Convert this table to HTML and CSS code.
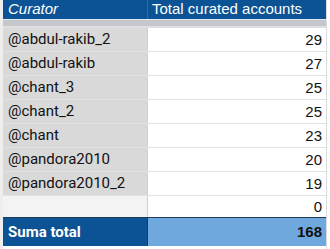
FILE: index.html
```html
<!DOCTYPE html>
<html>
<head>
<meta charset="utf-8">
<link rel="stylesheet" href="styles.css">
</head>
<body>
<div class="page">
  <div class="gutter"></div>
  <div class="sheet">
    <div class="row head">
      <div class="c1">Curator</div>
      <div class="c2">Total curated accounts</div>
    </div>
    <div class="freeze"></div>
    <div class="row"><div class="c1">@abdul-rakib_2</div><div class="c2">29</div></div>
    <div class="row"><div class="c1">@abdul-rakib</div><div class="c2">27</div></div>
    <div class="row"><div class="c1">@chant_3</div><div class="c2">25</div></div>
    <div class="row"><div class="c1">@chant_2</div><div class="c2">25</div></div>
    <div class="row"><div class="c1">@chant</div><div class="c2">23</div></div>
    <div class="row"><div class="c1">@pandora2010</div><div class="c2">20</div></div>
    <div class="row"><div class="c1">@pandora2010_2</div><div class="c2">19</div></div>
    <div class="row empty"><div class="c1"></div><div class="c2">0</div></div>
    <div class="row foot">
      <div class="c1">Suma total</div>
      <div class="c2">168</div>
    </div>
  </div>
  <div class="edge"></div>
</div>
</body>
</html>
```
FILE: styles.css
```css
html, body {
  margin: 0;
  padding: 0;
  background: #ffffff;
}
.page {
  display: flex;
  width: 330px;
  height: 249px;
  overflow: hidden;
}
.gutter {
  width: 3px;
  flex: none;
  background: #eeeeee;
}
.edge {
  flex: 1;
  background: #ffffff;
  border-left: 1px solid #dadada;
}
.sheet {
  width: 323px;
  flex: none;
  display: flex;
  flex-direction: column;
}
.row {
  display: grid;
  grid-template-columns: 145px 178px;
  height: 24px;
  box-sizing: border-box;
  border-bottom: 1px solid #e2e2e2;
}
.c1 {
  background: #d9d9d9;
  font-family: Roboto, "Liberation Sans", sans-serif;
  font-size: 15px;
  color: #111;
  padding-left: 5px;
  line-height: 23px;
  border-right: 1px solid #d0d0d0;
}
.c2 {
  background: #ffffff;
  font-family: "Liberation Sans", Arial, sans-serif;
  font-size: 15px;
  color: #111;
  text-align: right;
  padding-right: 4px;
  line-height: 23px;
}
.row.head {
  height: 19px;
  border-bottom: none;
}
.head .c1, .head .c2 {
  background: #0b5394;
  color: #ffffff;
  font-family: "Liberation Sans", Arial, sans-serif;
  line-height: 18px;
  font-size: 15px;
}
.head .c1 {
  font-style: italic;
  border-right: 1px solid #2a6aa8;
}
.head .c2 {
  text-align: left;
  padding-left: 4px;
}
.freeze {
  height: 9px;
  box-sizing: border-box;
  background: #c4c7cc;
  border-top: 1px solid #e4e6e9;
  border-bottom: 2px solid #e0e0e0;
}
.row.empty .c1 {
  background: #f3f3f3;
}
.row.empty {
  height: 22px;
  border-bottom: 2px solid #1f3b57;
}
.row.empty .c1, .row.empty .c2 {
  line-height: 21px;
}
.row.foot {
  height: 27px;
  border-bottom: none;
}
.foot .c1 {
  background: #0b5394;
  color: #ffffff;
  font-weight: bold;
  line-height: 28px;
  border-right: 1px solid #0a3f70;
}
.foot .c2 {
  background: #6fa8dc;
  color: #111;
  font-weight: bold;
  line-height: 28px;
}
```
